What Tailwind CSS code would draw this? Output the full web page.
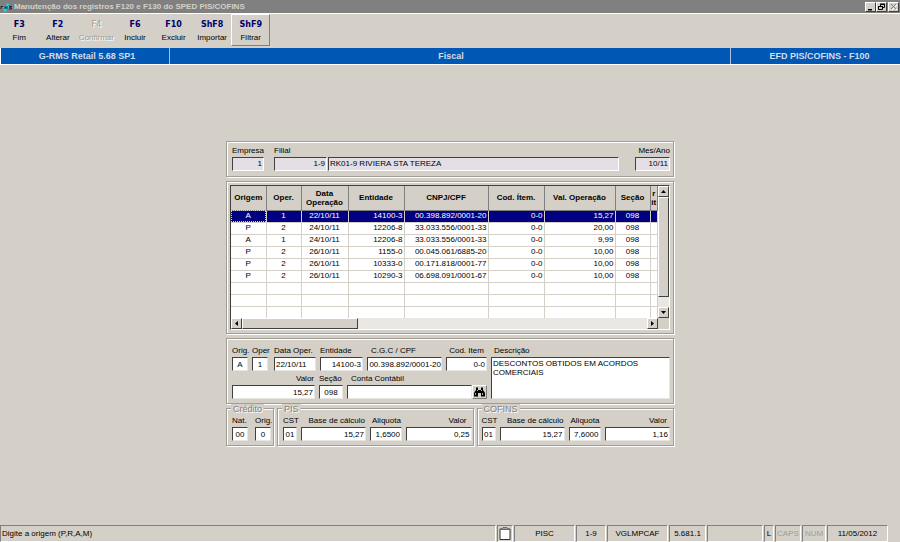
<!DOCTYPE html>
<html lang="pt-BR">
<head>
    <meta charset="UTF-8">
    <meta name="viewport" content="width=device-width, initial-scale=1.0">
    <title>Manutenção dos registros F120 e F130 do SPED PIS/COFINS</title>
    <script src="https://cdn.jsdelivr.net/npm/@tailwindcss/browser@4"></script>
</head>
<body class="min-h-screen flex flex-col bg-[#d4d0c8] text-black text-[8px] leading-[10px] font-['Liberation_Sans',Arial,sans-serif]">

    <!-- Title bar -->
    <header class="flex items-center h-[13px] bg-[#808080] text-[#d4d0c8]">
        <svg class="w-[13px] h-[12px] shrink-0" viewBox="0 0 13 12">
            <path d="M7 2l2 1-1 2 2 1-3 2-1 3-3-1 1-2-1-2 3-1z" fill="#22d3dd"/>
            <path d="M1 8V5.500h2M5 8V5.500l1 1 1-1V8M12 5.500H9.500v1l2 .5v1H9" fill="none" stroke="#222" stroke-width="1"/>
        </svg>
        <h1 class="flex-1 pl-px font-bold whitespace-nowrap">Manutenção dos registros F120 e F130 do SPED PIS/COFINS</h1>
        <div class="flex pr-px">
            <button aria-label="Minimizar" class="w-[11px] h-[10px] bg-[#d4d0c8] border border-t-white border-l-white border-r-[#404040] border-b-[#404040]">
                <svg class="w-full h-full" viewBox="0 0 9 8"><path d="M2 6h4v1.5H2z"/></svg>
            </button>
            <button aria-label="Restaurar" class="w-[11px] h-[10px] bg-[#d4d0c8] border border-t-white border-l-white border-r-[#404040] border-b-[#404040]">
                <svg class="w-full h-full" viewBox="0 0 9 8" fill="none" stroke="#000"><path d="M3.500 3V1.500H7.500V4.500H6M3 1h5M1.500 3.500h4v3h-4zM1 3.500h5"/></svg>
            </button>
            <button aria-label="Fechar" disabled class="w-[11px] h-[10px] ml-px bg-[#d4d0c8] border border-t-white border-l-white border-r-[#404040] border-b-[#404040]">
                <svg class="w-full h-full" viewBox="0 0 9 8" fill="none"><path d="M3 2l5 5M8 2L3 7" stroke="#fff"/><path d="M2 1l5 5M7 1L2 6" stroke="#808080"/></svg>
            </button>
        </div>
    </header>

    <!-- Toolbar -->
    <nav class="h-[35px] border-t border-white">
        <div class="grid grid-cols-7 w-[270px] h-[32px] text-center whitespace-nowrap">
            <button class="flex flex-col items-center justify-end pb-[3px] gap-[3px]"><b class="font-['DejaVu_Sans',sans-serif] text-[#00006c]">F3</b><span>Fim</span></button>
            <button class="flex flex-col items-center justify-end pb-[3px] gap-[3px]"><b class="font-['DejaVu_Sans',sans-serif] text-[#00006c]">F2</b><span>Alterar</span></button>
            <button disabled class="flex flex-col items-center justify-end pb-[3px] gap-[3px] text-[#a09d97] [text-shadow:1px_1px_0_#fff]"><span class="font-['DejaVu_Sans',sans-serif]">F4</span><span>Confirmar</span></button>
            <button class="flex flex-col items-center justify-end pb-[3px] gap-[3px]"><b class="font-['DejaVu_Sans',sans-serif] text-[#00006c]">F6</b><span>Incluir</span></button>
            <button class="flex flex-col items-center justify-end pb-[3px] gap-[3px]"><b class="font-['DejaVu_Sans',sans-serif] text-[#00006c]">F10</b><span>Excluir</span></button>
            <button class="flex flex-col items-center justify-end pb-[3px] gap-[3px]"><b class="font-['DejaVu_Sans',sans-serif] text-[#00006c]">ShF8</b><span>Importar</span></button>
            <button class="flex flex-col items-center justify-end pb-[2px] gap-[3px] border border-t-white border-l-white border-r-[#808080] border-b-[#808080]"><b class="font-['DejaVu_Sans',sans-serif] text-[#00006c]">ShF9</b><span>Filtrar</span></button>
        </div>
    </nav>

    <!-- Module strip -->
    <div class="flex h-[17px] bg-[#0058b4] border-l border-b border-white text-[#d4dce8] text-[9px] leading-[16px] font-bold text-center">
        <div class="w-[169px] pl-1 border-r border-[#a8c4e0]">G-RMS Retail 5.68 SP1</div>
        <div class="flex-1 pl-[2px] border-r border-[#a8c4e0]">Fiscal</div>
        <div class="w-[169px] pl-2">EFD PIS/COFINS - F100</div>
    </div>

    <main class="flex-1 pt-[76px]">
        <form class="w-full max-w-[448px] mx-auto flex flex-col gap-1">

            <!-- Empresa / filial -->
            <section class="flex h-[36px] pl-[5px] pr-[3px] pt-1 border border-[#a09d97] shadow-[1px_1px_0_#fff,inset_1px_1px_0_#fff]">
                <div class="w-[32px] mr-[10px]">
                    <label for="empresa" class="block">Empresa</label>
                    <input id="empresa" readonly value="1" class="block w-full h-[14px] mt-px px-px pb-[2px] text-right bg-[#e4dfe4] border border-t-[#404040] border-l-[#404040] border-r-white border-b-white">
                </div>
                <div class="w-[53px]">
                    <label for="filial" class="block">Filial</label>
                    <input id="filial" readonly value="1-9" class="block w-full h-[14px] mt-px px-px pb-[2px] text-right bg-[#e4dfe4] border border-t-[#404040] border-l-[#404040] border-r-white border-b-white">
                </div>
                <input aria-label="Nome da filial" readonly value="RK01-9 RIVIERA STA TEREZA" class="flex-1 min-w-0 h-[14px] ml-px mt-[11px] px-px pb-[2px] bg-[#e4dfe4] border border-t-[#404040] border-l-[#404040] border-r-white border-b-white">
                <div class="w-[35px] ml-[16px]">
                    <label for="mesano" class="block text-right">Mes/Ano</label>
                    <input id="mesano" readonly value="10/11" class="block w-full h-[14px] mt-px px-px pb-[2px] text-right bg-[#e4dfe4] border border-t-[#404040] border-l-[#404040] border-r-white border-b-white">
                </div>
            </section>

            <!-- Grid -->
            <section class="h-[153px] p-[3px] border border-[#a09d97] shadow-[1px_1px_0_#fff,inset_1px_1px_0_#fff]">
                <div class="h-full flex flex-col border border-t-[#404040] border-l-[#404040] border-r-white border-b-white">
                    <div class="flex flex-1 min-h-0">
                        <div class="flex-1 overflow-hidden bg-white">
                            <table class="w-full table-fixed border-collapse">
                                <colgroup>
                                    <col class="w-[35px]"><col class="w-[35px]"><col class="w-[47px]"><col class="w-[56px]"><col class="w-[84px]"><col class="w-[56px]"><col class="w-[71px]"><col class="w-[35px]"><col>
                                </colgroup>
                                <thead>
                                    <tr class="h-[24px] bg-[#d4d0c8] leading-[9px] [&>th]:border-r [&>th]:border-b [&>th]:border-[#808080] [&>th]:p-0">
                                        <th>Origem</th><th>Oper.</th><th>Data<br>Operação</th><th>Entidade</th><th>CNPJ/CPF</th><th>Cod. Ítem.</th><th>Val. Operação</th><th>Seção</th><th>r<br>it</th>
                                    </tr>
                                </thead>
                                <tbody id="rows"></tbody>
                            </table>
                        </div>
                        <div class="w-[11px] flex flex-col bg-[#e9e7e3]">
                            <button type="button" aria-label="Subir" class="h-[11px] bg-[#d4d0c8] border border-t-white border-l-white border-r-[#404040] border-b-[#404040]">
                                <svg class="w-full h-full" viewBox="0 0 9 9"><path d="M2 6h5L4.500 3z"/></svg>
                            </button>
                            <div class="h-[100px] bg-[#d4d0c8] border border-t-white border-l-white border-r-[#404040] border-b-[#404040]"></div>
                            <button type="button" aria-label="Descer" class="h-[11px] mt-auto bg-[#d4d0c8] border border-t-white border-l-white border-r-[#404040] border-b-[#404040]">
                                <svg class="w-full h-full" viewBox="0 0 9 9"><path d="M2 3h5L4.500 6z"/></svg>
                            </button>
                        </div>
                    </div>
                    <div class="flex h-[11px] mr-[11px] bg-[#e9e7e3]">
                        <button type="button" aria-label="Esquerda" class="w-[11px] bg-[#d4d0c8] border border-t-white border-l-white border-r-[#404040] border-b-[#404040]">
                            <svg class="w-full h-full" viewBox="0 0 9 9"><path d="M6 2v5L3 4.500z"/></svg>
                        </button>
                        <div class="w-[116px] bg-[#d4d0c8] border border-t-white border-l-white border-r-[#404040] border-b-[#404040]"></div>
                        <button type="button" aria-label="Direita" class="w-[11px] ml-auto bg-[#d4d0c8] border border-t-white border-l-white border-r-[#404040] border-b-[#404040]">
                            <svg class="w-full h-full" viewBox="0 0 9 9"><path d="M3 2v5l3-2.500z"/></svg>
                        </button>
                    </div>
                </div>
            </section>

            <!-- Detalhe do registro -->
            <section class="flex gap-1 h-[66px] pl-[5px] pr-[3px] pt-[7px] border border-[#a09d97] shadow-[1px_1px_0_#fff,inset_1px_1px_0_#fff] whitespace-nowrap">
                <div class="w-[255px]">
                    <div class="flex gap-1">
                        <div class="w-[16px]">
                            <label for="orig" class="block">Orig.</label>
                            <input id="orig" value="A" class="block w-full h-[14px] mt-px text-center bg-white border border-t-[#404040] border-l-[#404040] border-[#e8e6e2]">
                        </div>
                        <div class="w-[16px]">
                            <label for="oper" class="block">Oper</label>
                            <input id="oper" value="1" class="block w-full h-[14px] mt-px text-center bg-white border border-t-[#404040] border-l-[#404040] border-[#e8e6e2]">
                        </div>
                        <div class="w-[42px] ml-[2px]">
                            <label for="data" class="block">Data Oper.</label>
                            <input id="data" value="22/10/11" class="block w-full h-[14px] mt-px px-px bg-white border border-t-[#404040] border-l-[#404040] border-[#e8e6e2]">
                        </div>
                        <div class="w-[43px]">
                            <label for="entidade" class="block">Entidade</label>
                            <input id="entidade" value="14100-3" class="block w-full h-[14px] mt-px px-px text-right bg-white border border-t-[#404040] border-l-[#404040] border-[#e8e6e2]">
                        </div>
                        <div class="w-[75px]">
                            <label for="cgc" class="block pl-1">C.G.C / CPF</label>
                            <input id="cgc" value="00.398.892/0001-20" class="block w-full h-[14px] mt-px text-right bg-white border border-t-[#404040] border-l-[#404040] border-[#e8e6e2]">
                        </div>
                        <div class="w-[41px]">
                            <label for="item" class="block text-center">Cod. Item</label>
                            <input id="item" value="0-0" class="block w-full h-[14px] mt-px px-px text-right bg-white border border-t-[#404040] border-l-[#404040] border-[#e8e6e2]">
                        </div>
                    </div>
                    <div class="flex gap-1 mt-[3px]">
                        <div class="w-[83px]">
                            <label for="valor" class="block pr-px text-right">Valor</label>
                            <input id="valor" value="15,27" class="block w-full h-[14px] mt-px px-px text-right bg-white border border-t-[#404040] border-l-[#404040] border-[#e8e6e2]">
                        </div>
                        <div class="w-[24px]">
                            <label for="secao" class="block">Seção</label>
                            <input id="secao" value="098" class="block w-full h-[14px] mt-px text-center bg-white border border-t-[#404040] border-l-[#404040] border-[#e8e6e2]">
                        </div>
                        <div class="flex-1">
                            <label for="conta" class="block pl-1">Conta Contábil</label>
                            <div class="flex mt-px">
                                <input id="conta" class="flex-1 min-w-0 h-[14px] px-px bg-white border border-t-[#404040] border-l-[#404040] border-[#e8e6e2]">
                                <button type="button" aria-label="Procurar conta" class="w-[15px] h-[14px] bg-[#d4d0c8] border border-t-white border-l-white border-r-[#808080] border-b-[#808080]">
                                    <svg class="w-full h-full" viewBox="0 0 13 12">
                                        <path d="M3 1.500h2V4h3V1.500h2V4l2 3v3.500H8V7H5v3.500H1V7l2-3z"/>
                                        <path d="M2.500 7v2M9.500 7v2M4.500 4v1M8.500 4v1" stroke="#d4d0c8" stroke-width=".8"/>
                                    </svg>
                                </button>
                            </div>
                        </div>
                    </div>
                </div>
                <div class="flex-1">
                    <label for="descricao" class="block pl-[3px]">Descrição</label>
                    <textarea id="descricao" class="block w-full h-[42px] mt-px px-px pt-px leading-[9px] whitespace-pre-wrap resize-none bg-white border border-t-[#404040] border-l-[#404040] border-[#e8e6e2]">DESCONTOS OBTIDOS EM ACORDOS
COMERCIAIS</textarea>
                </div>
            </section>

            <!-- Crédito / PIS / COFINS -->
            <section class="flex gap-[3px] whitespace-nowrap">
                <fieldset class="relative w-[48px] h-[38px] flex gap-[7px] pl-[5px] pt-[7px] border border-[#a09d97] shadow-[1px_1px_0_#fff,inset_1px_1px_0_#fff]">
                    <legend class="absolute left-1 -top-[5px] px-[2px] text-[9px] leading-[10px] bg-[#d4d0c8] text-[#808080] [text-shadow:1px_1px_0_#fff]">Crédito</legend>
                    <div class="w-[16px]">
                        <label for="nat" class="block">Nat.</label>
                        <input id="nat" value="00" class="block w-full h-[14px] mt-px text-center bg-white border border-t-[#404040] border-l-[#404040] border-[#e8e6e2]">
                    </div>
                    <div class="w-[16px]">
                        <label for="origcred" class="block">Orig.</label>
                        <input id="origcred" value="0" class="block w-full h-[14px] mt-px text-center bg-white border border-t-[#404040] border-l-[#404040] border-[#e8e6e2]">
                    </div>
                </fieldset>
                <fieldset class="relative flex-1 h-[38px] flex gap-1 pl-[5px] pr-px pt-[7px] border border-[#a09d97] shadow-[1px_1px_0_#fff,inset_1px_1px_0_#fff]">
                    <legend class="absolute left-1 -top-[5px] px-[2px] text-[9px] leading-[10px] bg-[#d4d0c8] text-[#808080] [text-shadow:1px_1px_0_#fff]">PIS</legend>
                    <div class="w-[14px]">
                        <label for="cstpis" class="block">CST</label>
                        <input id="cstpis" value="01" class="block w-full h-[14px] mt-px text-center bg-white border border-t-[#404040] border-l-[#404040] border-[#e8e6e2]">
                    </div>
                    <div class="w-[65px]">
                        <label for="basepis" class="block pr-px text-right">Base de cálculo</label>
                        <input id="basepis" value="15,27" class="block w-full h-[14px] mt-px px-px text-right bg-white border border-t-[#404040] border-l-[#404040] border-[#e8e6e2]">
                    </div>
                    <div class="w-[32px]">
                        <label for="aliqpis" class="block pl-[2px]">Aliquota</label>
                        <input id="aliqpis" value="1,6500" class="block w-full h-[14px] mt-px px-px text-right bg-white border border-t-[#404040] border-l-[#404040] border-[#e8e6e2]">
                    </div>
                    <div class="flex-1">
                        <label for="valorpis" class="block pr-[5px] text-right">Valor</label>
                        <input id="valorpis" value="0,25" class="block w-full h-[14px] mt-px px-px text-right bg-white border border-t-[#404040] border-l-[#404040] border-[#e8e6e2]">
                    </div>
                </fieldset>
                <fieldset class="relative flex-1 h-[38px] flex gap-1 pl-1 pr-[3px] pt-[7px] border border-[#a09d97] shadow-[1px_1px_0_#fff,inset_1px_1px_0_#fff]">
                    <legend class="absolute left-1 -top-[5px] px-[2px] text-[9px] leading-[10px] bg-[#d4d0c8] text-[#808080] [text-shadow:1px_1px_0_#fff]">COFINS</legend>
                    <div class="w-[14px]">
                        <label for="cstcofins" class="block">CST</label>
                        <input id="cstcofins" value="01" class="block w-full h-[14px] mt-px text-center bg-white border border-t-[#404040] border-l-[#404040] border-[#e8e6e2]">
                    </div>
                    <div class="w-[65px]">
                        <label for="basecofins" class="block pr-px text-right">Base de cálculo</label>
                        <input id="basecofins" value="15,27" class="block w-full h-[14px] mt-px px-px text-right bg-white border border-t-[#404040] border-l-[#404040] border-[#e8e6e2]">
                    </div>
                    <div class="w-[32px]">
                        <label for="aliqcofins" class="block pl-[2px]">Aliquota</label>
                        <input id="aliqcofins" value="7,6000" class="block w-full h-[14px] mt-px px-px text-right bg-white border border-t-[#404040] border-l-[#404040] border-[#e8e6e2]">
                    </div>
                    <div class="flex-1">
                        <label for="valorcofins" class="block pr-[3px] text-right">Valor</label>
                        <input id="valorcofins" value="1,16" class="block w-full h-[14px] mt-px px-px text-right bg-white border border-t-[#404040] border-l-[#404040] border-[#e8e6e2]">
                    </div>
                </fieldset>
            </section>
        </form>
    </main>

    <!-- Status bar -->
    <footer class="flex gap-px h-[17px] pr-[12px] leading-[15px] text-center whitespace-nowrap [&>div]:border [&>div]:border-t-[#808080] [&>div]:border-l-[#808080] [&>div]:border-r-white [&>div]:border-b-white">
        <div class="flex-1 pl-px text-left">Digite a origem (P,R,A,M)</div>
        <div class="w-[16px]">
            <svg class="w-[14px] h-[15px]" viewBox="0 0 14 15">
                <path d="M2 3h10v10.500H2z" fill="#fff" stroke="#333"/>
                <path d="M3 3.500l2-2h4l2 2z" fill="#a09d97" stroke="#555" stroke-width=".7"/>
            </svg>
        </div>
        <div class="w-[61px]">PISC</div>
        <div class="w-[30px]">1-9</div>
        <div class="w-[61px]">VGLMPCAF</div>
        <div class="w-[37px]">5.681.1</div>
        <div class="w-[56px]"></div>
        <div class="w-[10px]">L</div>
        <div class="w-[26px] text-[#a09d97]">CAPS</div>
        <div class="w-[24px] text-[#a09d97]">NUM</div>
        <div class="w-[61px]">11/05/2012</div>
    </footer>

    <script>
        const registros = [
            ['A', '1', '22/10/11', '14100-3', '00.398.892/0001-20', '0-0', '15,27', '098'],
            ['P', '2', '24/10/11', '12206-8', '33.033.556/0001-33', '0-0', '20,00', '098'],
            ['A', '1', '24/10/11', '12206-8', '33.033.556/0001-33', '0-0', '9,99', '098'],
            ['P', '2', '26/10/11', '1155-0', '00.045.061/6885-20', '0-0', '10,00', '098'],
            ['P', '2', '26/10/11', '10333-0', '00.171.818/0001-77', '0-0', '10,00', '098'],
            ['P', '2', '26/10/11', '10290-3', '06.698.091/0001-67', '0-0', '10,00', '098'],
            [], [], []
        ];
        const alinhamento = ['text-center', 'text-center', 'text-center', 'text-right', 'text-right', 'text-right', 'text-right', 'text-center', ''];

        document.getElementById('rows').innerHTML = registros.map((registro, i) => `
            <tr class="h-[12px] ${i === 0 ? 'bg-[#000080] text-white' : ''}">
                ${alinhamento.map((a, c) => `<td class="p-0 px-px border-r border-b border-[#d4d0c8] ${a} ${i === 0 && c === 0 ? 'outline-1 outline-dotted outline-[#d4d0c8] -outline-offset-1' : ''}">${registro[c] || ''}</td>`).join('')}
            </tr>
        `).join('');
    </script>
</body>
</html>
